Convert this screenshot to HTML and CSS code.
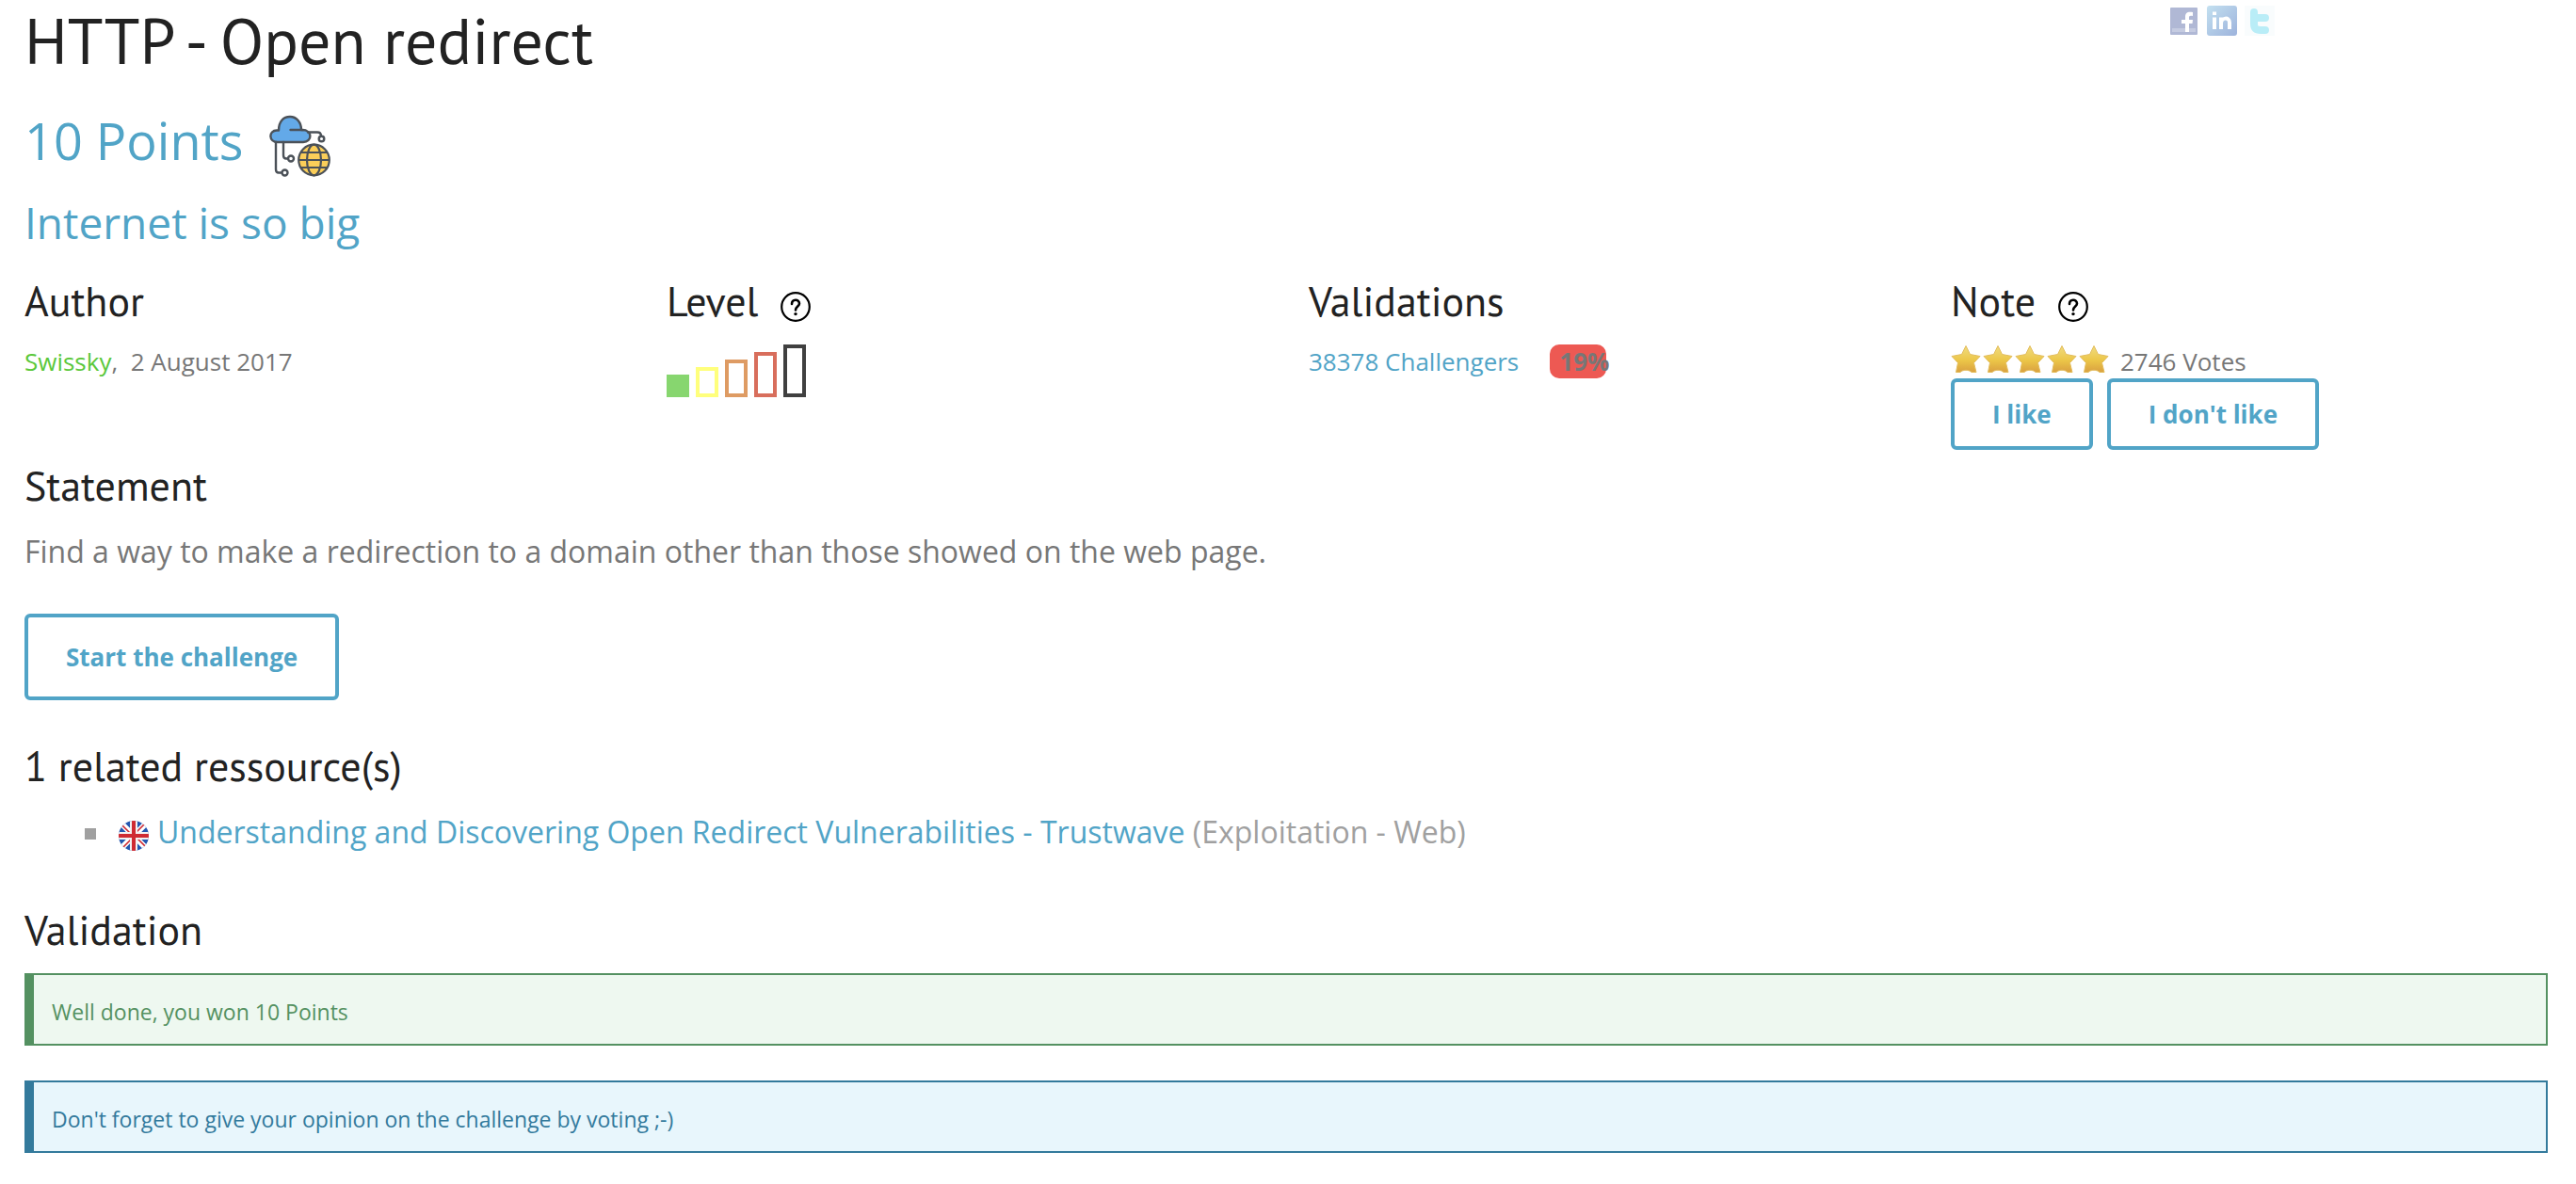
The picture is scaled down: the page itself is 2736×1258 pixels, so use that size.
FILE: index.html
```html
<!DOCTYPE html>
<html lang="en">
<head>
<meta charset="utf-8">
<meta name="viewport" content="width=device-width, initial-scale=1">
<title>HTTP - Open redirect</title>
<link rel="stylesheet" href="styles.css">
</head>
<body>
<svg class="sprite" aria-hidden="true">
  <defs>
    <linearGradient id="gold" x1="0" y1="0" x2="0" y2="1">
      <stop offset="0" stop-color="#f0dc80"/>
      <stop offset="0.55" stop-color="#ecc648"/>
      <stop offset="1" stop-color="#d9a040"/>
    </linearGradient>
    <linearGradient id="sky" x1="0" y1="0" x2="1" y2="1">
      <stop offset="0" stop-color="#c3e0f0"/>
      <stop offset="1" stop-color="#9db3dc"/>
    </linearGradient>
    <symbol id="star" viewBox="0 0 32 30">
      <path fill="url(#gold)" stroke="#e3bd5c" stroke-linejoin="round" d="M16 1.500L20.500 10.500L31 12.500L24.500 19.500L27 29.500H22C19 26.500 13 26.500 10 29.500H5.500L7.500 19.500L1 12.500L11.500 10.500Z"/>
    </symbol>
    <symbol id="help" viewBox="0 0 32 32">
      <g fill="none" stroke="#000" stroke-width="2.200" stroke-linecap="round">
        <circle cx="16" cy="16" r="14.800"/>
        <path stroke-width="2.600" d="M12 13C12 7.500 20 7.500 20 12.500C20 15.500 16 15.500 16 19.500"/>
      </g>
      <circle cx="16" cy="23.600" r="1.700"/>
    </symbol>
  </defs>
</svg>
<main class="page">
  <header class="top">
    <h1 class="title">HTTP - Open redirect</h1>
    <nav class="social" aria-label="Share">
      <a href="#facebook" aria-label="Facebook"><svg class="icon" viewBox="0 0 32 32"><rect x="1" y="2" width="29" height="29" rx="1" fill="#b0b8d5"/><path fill="#c5cbe1" d="M3 24H28V28H3z"/><path fill="#fff" d="M17 28V19H13V15H17V12C17 7.500 19.500 6 25 7V11C21.500 10.500 21 11 21 13V15H25L24.500 19H21V28z"/></svg></a>
      <a href="#linkedin" aria-label="LinkedIn"><svg class="icon" viewBox="0 0 32 32"><rect width="32" height="32" rx="3" fill="url(#sky)"/><g fill="none" stroke="#fff" stroke-width="4"><path d="M8 12.500V25M8 6.500V10M15 25V12.500M15 19C15 12.500 24 11.500 24 18V25"/></g></svg></a>
      <a href="#twitter" aria-label="Twitter"><svg class="icon" viewBox="0 0 32 32"><rect width="32" height="32" fill="#f9fcfd"/><path fill="none" stroke="#b9edf7" stroke-width="8" stroke-linecap="round" stroke-linejoin="round" d="M10 7V19C10 24 12 26 17 26H22M11 13H22"/></svg></a>
    </nav>
  </header>

  <div class="points">
    <span>10 Points</span>
    <svg class="category" viewBox="0 0 66 66" role="img" aria-label="Web - Client">
      <g fill="none" stroke="#4b5158" stroke-width="2.400" stroke-linejoin="round" stroke-linecap="round">
        <path fill="#63a9e8" d="M10 16.500C10 7 15 2 22 2C29 2 34 8 34 16H35C46 16 46 29 36 29H9C-1 29-1 16.500 8 16.500Z"/>
        <path d="M22.500 16H36M41 18.500H51Q55 18.500 55 22.500"/>
        <circle cx="55.500" cy="25.500" r="2.800"/>
        <path d="M7 29V58Q7 61.500 10 61.500H13M15 29V43Q15 46.500 18 46.500H20"/>
        <circle cx="16.500" cy="61.500" r="3"/><circle cx="23" cy="46.500" r="3"/>
      </g>
      <g fill="none" stroke="#4b5158" stroke-width="2.200">
        <circle cx="47.500" cy="48" r="16.300" fill="#fbce59"/>
        <ellipse cx="47.500" cy="48" rx="7.500" ry="16.300"/>
        <path d="M31 48H64M34 40H61M34 56H61"/>
      </g>
    </svg>
  </div>
  <p class="subtitle">Internet is so big</p>

  <section class="facts">
    <div>
      <h2 class="heading">Author</h2>
      <p class="fact"><a class="author" href="#author">Swissky</a>,&nbsp; 2 August 2017</p>
    </div>
    <div>
      <h2 class="heading">Level <a class="help" href="#level" aria-label="About levels"><svg class="icon"><use href="#help"/></svg></a></h2>
      <div class="level" role="img" aria-label="Very easy">
        <span class="bar bar-1"></span><span class="bar bar-2"></span><span class="bar bar-3"></span><span class="bar bar-4"></span><span class="bar bar-5"></span>
      </div>
    </div>
    <div>
      <h2 class="heading">Validations</h2>
      <p class="fact validations"><a href="#challengers">38378 Challengers</a><span class="rate">19%</span></p>
    </div>
    <div>
      <h2 class="heading">Note <a class="help" href="#note" aria-label="About notes"><svg class="icon"><use href="#help"/></svg></a></h2>
      <div class="fact votes">
        <span class="stars" role="img" aria-label="5 stars"><svg class="star"><use href="#star"/></svg><svg class="star"><use href="#star"/></svg><svg class="star"><use href="#star"/></svg><svg class="star"><use href="#star"/></svg><svg class="star"><use href="#star"/></svg></span>
        <span>2746 Votes</span>
      </div>
      <div class="vote-actions">
        <button class="button" type="button">I like</button>
        <button class="button" type="button">I don't like</button>
      </div>
    </div>
  </section>

  <section class="statement">
    <h2 class="heading">Statement</h2>
    <p class="text">Find a way to make a redirection to a domain other than those showed on the web page.</p>
    <button class="button button-large" type="button">Start the challenge</button>
  </section>

  <section class="resources">
    <h2 class="heading">1 related ressource(s)</h2>
    <ul class="resource-list">
      <li class="text resource">
        <svg class="flag" viewBox="0 0 32 32" role="img" aria-label="English">
          <clipPath id="disc"><circle cx="16" cy="16" r="16"/></clipPath>
          <g clip-path="url(#disc)">
            <path fill="#2457b0" d="M0 0H32V32H0z"/>
            <path stroke="#fff" stroke-width="6" d="M0 0L32 32M32 0L0 32"/>
            <path stroke="#cf2b33" stroke-width="1.600" d="M0 1L15 16M31 0L16 15M32 31L17 16M1 32L16 17"/>
            <path stroke="#f3f3f3" stroke-width="8" d="M16 0V32M0 16H32"/>
            <path stroke="#cf2b33" stroke-width="4" d="M16 0V32M0 16H32"/>
          </g>
        </svg>
        <span><a href="#resource">Understanding and Discovering Open Redirect Vulnerabilities - Trustwave</a> <span class="topic">(Exploitation - Web)</span></span>
      </li>
    </ul>
  </section>

  <section class="validation">
    <h2 class="heading">Validation</h2>
    <p class="alert alert-success">Well done, you won 10 Points</p>
    <p class="alert alert-info">Don't forget to give your opinion on the challenge by voting ;-)</p>
  </section>
</main>
</body>
</html>
```
FILE: styles.css
```css
* {
  box-sizing: border-box;
}

body {
  margin: 0;
  background: #fff;
  color: #777;
  font-family: "Open Sans", "Noto Sans", sans-serif;
  font-size: 26px;
  line-height: 36px;
}

h1, h2, p, ul {
  margin: 0;
  padding: 0;
  font-weight: 400;
}

a {
  color: #51a4c7;
  text-decoration: none;
}

svg {
  display: block;
}

.sprite {
  position: absolute;
  width: 0;
  height: 0;
}

.page {
  padding: 0 30px 32px 26px;
}

.icon {
  width: 32px;
  height: 32px;
}

.top {
  display: flex;
  justify-content: space-between;
}

.title {
  color: #222;
  font-family: "PT Sans", Lato, sans-serif;
  font-size: 68px;
  line-height: 86px;
}

.social {
  display: flex;
  flex: 0 0 15%;
  gap: 8px;
  padding-top: 6px;
}

.points {
  display: flex;
  align-items: center;
  gap: 28px;
  margin-top: 24px;
  color: #51a4c7;
  font-size: 54px;
  line-height: 76px;
}

.category {
  width: 66px;
  height: 66px;
  margin-top: 12px;
}

.subtitle {
  margin-top: 16px;
  color: #51a4c7;
  font-size: 46px;
  line-height: 64px;
}

.heading {
  display: flex;
  align-items: center;
  gap: 24px;
  margin-bottom: 15px;
  color: #222;
  font-family: "PT Sans", Lato, sans-serif;
  font-size: 44px;
  line-height: 62px;
}

.help {
  padding-top: 12px;
}

.facts {
  display: grid;
  grid-template-columns: repeat(4, 1fr);
  gap: 48px;
  margin-top: 21px;
}

.author {
  color: #5bc83b;
}

.level {
  display: flex;
  align-items: flex-end;
  gap: 7px;
  height: 56px;
}

.bar {
  width: 24px;
  border: 4px solid;
}

.bar-1 { height: 24px; color: #87d66f; background: #87d66f; }
.bar-2 { height: 32px; color: #ffff7c; }
.bar-3 { height: 40px; color: #de9b63; }
.bar-4 { height: 48px; color: #d86e5c; }
.bar-5 { height: 56px; color: #404040; }

.validations {
  display: flex;
  gap: 33px;
}

.rate {
  width: 60px;
  padding-left: 10px;
  border-radius: 10px;
  background: #ed5953;
  font-weight: 700;
}

.votes {
  display: flex;
  gap: 12px;
}

.stars {
  display: flex;
  gap: 2px;
}

.star {
  width: 32px;
  height: 30px;
}

.vote-actions {
  display: flex;
  gap: 15px;
}

.button {
  padding: 16px 40px;
  border: 4px solid #51a4c7;
  border-radius: 6px;
  background: #fff;
  color: #51a4c7;
  font: 700 26px/36px "Open Sans", "Noto Sans", sans-serif;
  cursor: pointer;
}

.button-large {
  margin-top: 42px;
  padding: 24px 40px;
}

.text {
  font-size: 32px;
  line-height: 48px;
}

.statement {
  margin-top: 7px;
}

.resources {
  margin-top: 39px;
}

.resource-list {
  padding-left: 64px;
  list-style: none;
}

.resource {
  display: flex;
  align-items: center;
  color: #a0a0a0;
}

.resource::before {
  width: 12px;
  height: 12px;
  margin: 4px 24px 0 0;
  background: #a0a0a0;
  content: "";
}

.flag {
  width: 32px;
  height: 32px;
  margin: 8px 9px 0 0;
}

.validation {
  margin-top: 49px;
}

.alert {
  padding: 22px 20px 17px 19px;
  border: 2px solid;
  border-left-width: 10px;
  font-size: 23px;
  line-height: 34px;
}

.alert + .alert {
  margin-top: 37px;
}

.alert-success {
  border-color: #549161;
  background: #eef8f0;
  color: #549161;
}

.alert-info {
  border-color: #337a9c;
  background: #e8f6fc;
  color: #337a9c;
}
```
